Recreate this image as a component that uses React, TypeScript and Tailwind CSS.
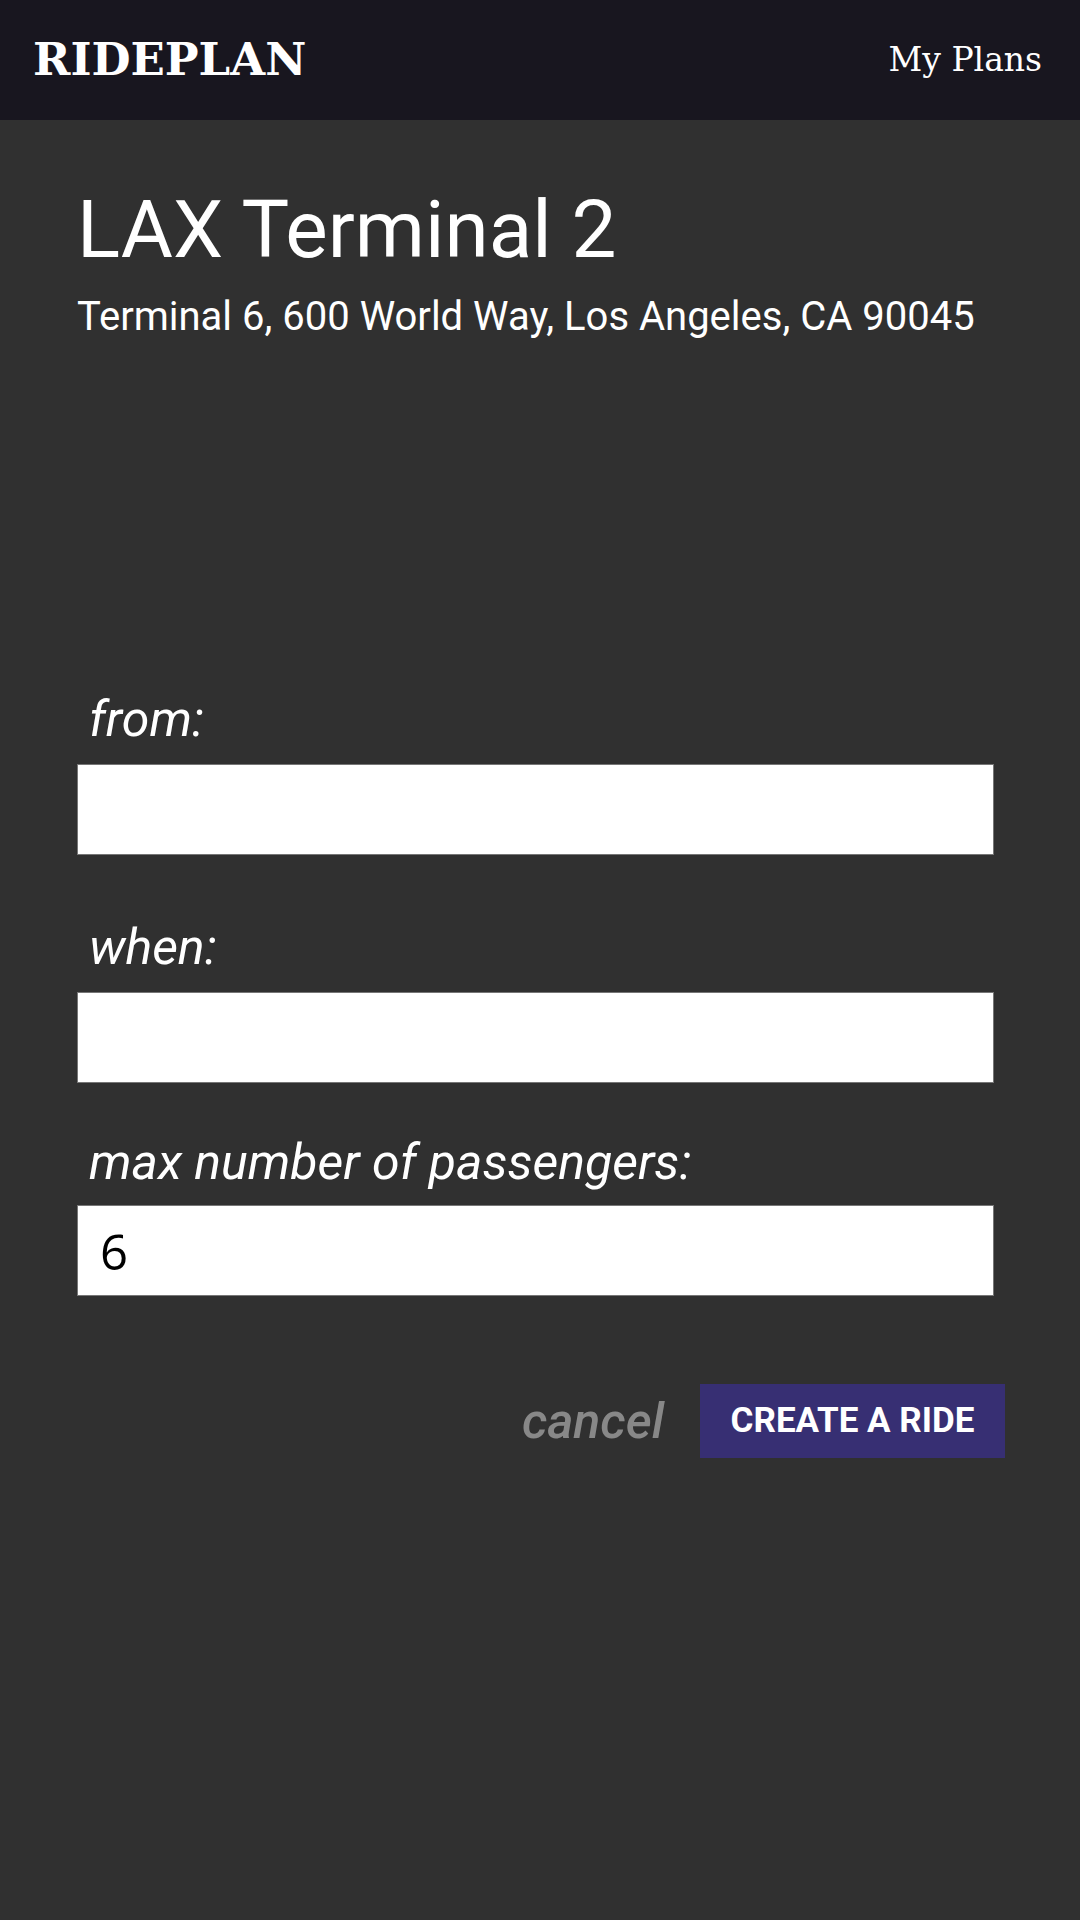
import React from 'react';

const labelCls = "block pl-[12px] text-[50px] italic text-white leading-[56px] font-['Roboto',sans-serif]";
const inputCls = "block w-[917px] h-[91px] bg-white border border-[#767676] px-[22px] text-[49px] text-black font-['Open_Sans',sans-serif] outline-none";

export default function App() {
   return (
      <div className="min-h-[1920px] bg-[#303030] font-['Roboto',sans-serif]">
         <header className="h-[120px] bg-[#18161f] flex items-center justify-between pl-[33px] pr-[38px]">
            <div className="text-[45px] font-bold text-white leading-[52px] font-['DejaVu_Serif',serif]">RIDEPLAN</div>
            <a className="text-[33px] text-white leading-[40px] font-['DejaVu_Serif',serif]">My Plans</a>
         </header>
         <main className="pl-[77px] pr-[75px]">
            <h1 className="mt-[70px] text-[80px] text-white leading-[80px]">LAX Terminal 2</h1>
            <p className="mt-[23px] text-[40px] text-white leading-[48px]">Terminal 6, 600 World Way, Los Angeles, CA 90045</p>

            <form className="mt-[350px]" onSubmit={(e) => e.preventDefault()}>
               <label className={labelCls}>from:</label>
               <input className={`${inputCls} mt-[17px]`} />

               <label className={`${labelCls} mt-[64px]`}>when:</label>
               <input className={`${inputCls} mt-[17px]`} />

               <label className={`${labelCls} mt-[51px]`}>max number of passengers:</label>
               <input className={`${inputCls} mt-[15px]`} defaultValue="6" />

               <div className="mt-[88px] flex items-center justify-end gap-[36px]">
                  <button type="button" className="text-[50px] italic font-medium text-[#888888] leading-[60px]">cancel</button>
                  <button type="submit" className="w-[305px] h-[74px] bg-[#372f73] text-white text-[35px] font-bold uppercase">Create a ride</button>
               </div>
            </form>
         </main>
      </div>
   );
}
